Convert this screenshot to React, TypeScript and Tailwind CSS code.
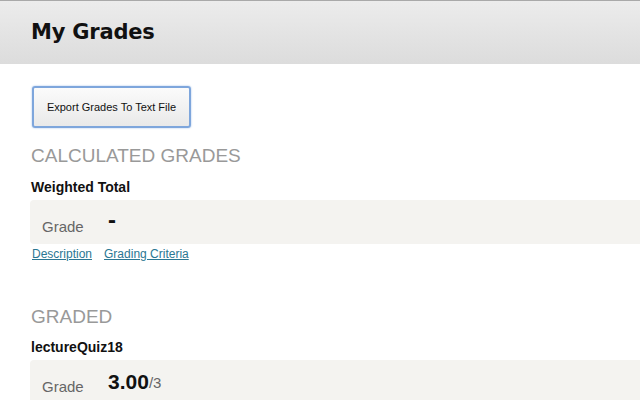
export default function App() {
  return (
    <div className="h-[400px] w-[640px] overflow-hidden bg-white font-['Liberation_Sans',Arial,sans-serif]">
      <header className="h-[64px] border-t border-[#a9a9a9] bg-gradient-to-b from-[#ececec] to-[#dcdcdc] pl-[31px] pt-[17px]">
        <h1 className="font-['DejaVu_Sans',sans-serif] text-[21px] leading-[28px] font-bold tracking-[-0.2px] text-[#111]">
          My Grades
        </h1>
      </header>

      <main className="pl-[30px]">
        <button className="mt-[22px] ml-[2px] h-[42px] w-[159px] rounded-[3px] border-2 border-[#7ea6dc] bg-gradient-to-b from-[#fbfbfb] to-[#e9e9e9] text-[11px] text-[#111] shadow-[0_0_2px_#9dbbe6]">
          Export Grades To Text File
        </button>

        <h2 className="mt-[16px] ml-[1px] text-[19px] leading-[24px] text-[#999]">CALCULATED GRADES</h2>
        <h3 className="mt-[11px] ml-[1px] text-[14px] leading-[16px] font-bold text-[#111]">Weighted Total</h3>
        <div className="mt-[5px] flex h-[44px] items-center rounded-l-[4px] bg-[#f4f3f0] pl-[12px]">
          <span className="mt-[10px] w-[66px] text-[15px] text-[#666]">Grade</span>
          <span className="-mt-[4px] text-[24px] font-bold text-[#111]">-</span>
        </div>
        <div className="mt-[3px] ml-[2px] flex gap-[12px] text-[12px] leading-[14px] text-[#2b7793]">
          <a href="#" className="underline">Description</a>
          <a href="#" className="underline">Grading Criteria</a>
        </div>

        <h2 className="mt-[44px] ml-[1px] text-[19px] leading-[24px] text-[#999]">GRADED</h2>
        <h3 className="mt-[10px] ml-[1px] text-[14px] leading-[16px] font-bold text-[#111]">lectureQuiz18</h3>
        <div className="mt-[5px] flex h-[44px] items-center rounded-l-[4px] bg-[#f4f3f0] pl-[12px]">
          <span className="mt-[10px] w-[66px] text-[15px] text-[#666]">Grade</span>
          <span className="text-[21px] font-bold text-[#111]">3.00</span>
          <span className="mt-[3px] text-[15px] text-[#666]">/3</span>
        </div>
      </main>
    </div>
  );
}
